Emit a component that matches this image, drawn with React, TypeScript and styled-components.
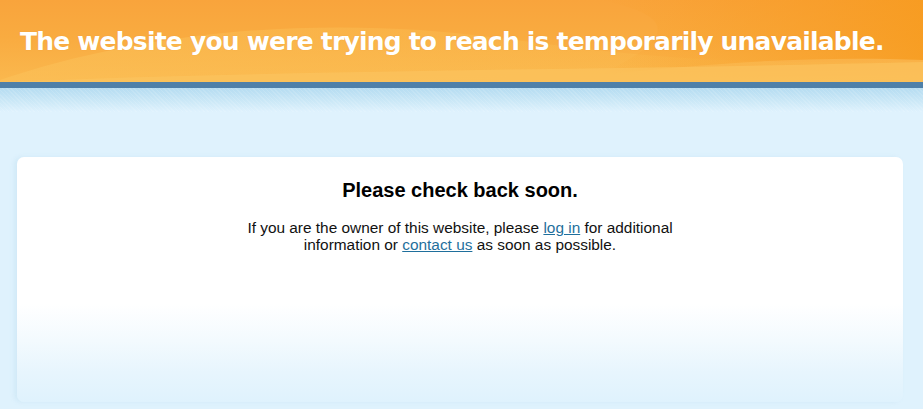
import React from "react";
import styled, { createGlobalStyle } from "styled-components";

const Global = createGlobalStyle`
  html, body { margin: 0; padding: 0; }
  body {
    background: #dff2fd;
    font-family: "Liberation Sans", Arial, sans-serif;
    min-height: 409px;
  }
`;

const Page = styled.div`
  display: flex;
  flex-direction: column;
  min-height: 409px;
  overflow: hidden;
`;

const Header = styled.header`
  position: relative;
  height: 82px;
  display: flex;
  align-items: center;
  padding: 0 20px;
  overflow: hidden;
  background:
    radial-gradient(ellipse 420px 60px at 150px 120px, rgba(255, 214, 120, 0.45), rgba(255, 214, 120, 0) 70%),
    linear-gradient(180deg, #f9a43c 0%, #f9ab40 45%, #fab84e 100%);
`;

const Waves = styled.svg`
  position: absolute;
  inset: 0;
  width: 100%;
  height: 100%;
`;

const Title = styled.h1`
  position: relative;
  margin: 0;
  padding-top: 1px;
  color: #fff;
  font-family: "DejaVu Sans", Verdana, sans-serif;
  font-weight: bold;
  font-size: 25px;
  letter-spacing: -0.8px;
  white-space: nowrap;
  text-shadow: 0 0 1px rgba(200, 110, 0, 0.25);
`;

const Rule = styled.div`
  height: 6px;
  background: #4f80a9;
`;

const Band = styled.div`
  height: 24px;
  background:
    repeating-linear-gradient(45deg, rgba(255, 255, 255, 0.12) 0 1px, rgba(255, 255, 255, 0) 1px 3px),
    linear-gradient(180deg, #b5dcf1 0%, #cbe8f7 55%, #dff2fd 100%);
`;

const Main = styled.main`
  padding: 45px 20px 0 17px;
`;

const Card = styled.section`
  height: 245px;
  border-radius: 7px;
  box-shadow: -3px 0 4px rgba(180, 215, 235, 0.3);
  background: linear-gradient(180deg, #ffffff 0%, #ffffff 60%, #f3fafe 75%, #e7f5fd 88%, #dff2fd 100%);
  display: flex;
  flex-direction: column;
  align-items: center;
  padding-top: 21px;
  box-sizing: border-box;
`;

const Heading = styled.h2`
  margin: 0 0 17px;
  font-size: 20px;
  font-weight: bold;
  color: #000;
  line-height: 24px;
`;

const Text = styled.p`
  margin: 0;
  font-size: 15.4px;
  line-height: 17px;
  color: #111;
  text-align: center;
  max-width: 445px;
`;

const Link = styled.a`
  color: #1f6f9c;
  text-decoration: underline;
`;

export default function App() {
  return (
    <Page>
      <Global />
      <Header>
        <Waves viewBox="0 0 923 82" preserveAspectRatio="none" aria-hidden="true">
          <defs>
            <linearGradient id="w1" x1="0" y1="0" x2="1" y2="0">
              <stop offset="0" stopColor="#fcc25a" stopOpacity="0.55" />
              <stop offset="0.6" stopColor="#fbbf52" stopOpacity="0.35" />
              <stop offset="1" stopColor="#fbbf52" stopOpacity="0" />
            </linearGradient>
            <linearGradient id="w2" x1="0" y1="0" x2="1" y2="0">
              <stop offset="0" stopColor="#f7991e" stopOpacity="0" />
              <stop offset="0.7" stopColor="#f7991e" stopOpacity="0.55" />
              <stop offset="1" stopColor="#f79a1c" stopOpacity="0.8" />
            </linearGradient>
          </defs>
          <path d="M0 80 C 120 40, 260 20, 420 30 C 560 40, 640 70, 923 60 L 923 82 L 0 82 Z" fill="url(#w1)" />
          <path d="M600 0 L 923 0 L 923 60 C 800 55, 700 65, 600 75 C 650 50, 700 20, 600 0 Z" fill="url(#w2)" />
          <path d="M0 82 C 300 70, 600 70, 923 62 L 923 82 Z" fill="#fbc460" fillOpacity="0.6" />
        </Waves>
        <Title>The website you were trying to reach is temporarily unavailable.</Title>
      </Header>
      <Rule />
      <Band />
      <Main>
        <Card>
          <Heading>Please check back soon.</Heading>
          <Text>
            If you are the owner of this website, please <Link href="#">log in</Link> for additional
            information or <Link href="#">contact us</Link> as soon as possible.
          </Text>
        </Card>
      </Main>
    </Page>
  );
}
